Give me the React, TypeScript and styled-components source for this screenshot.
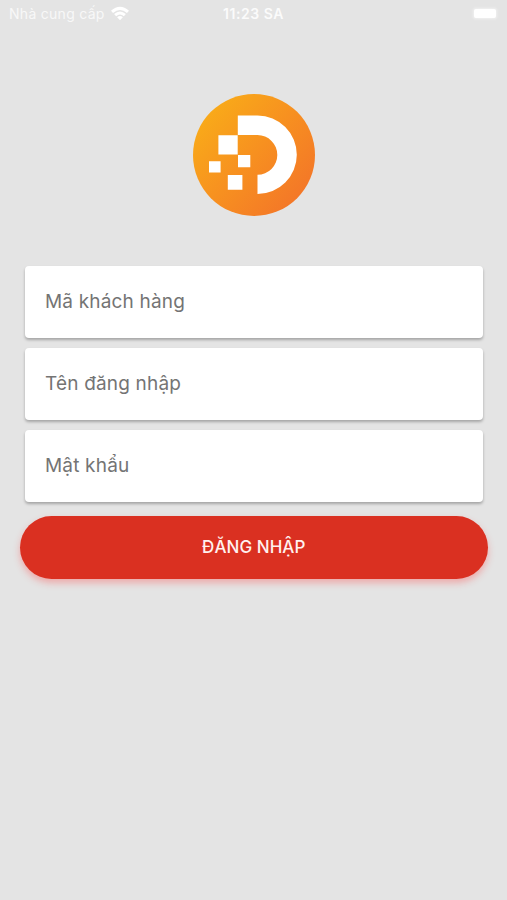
import React from "react";
import styled, { createGlobalStyle } from "styled-components";

const GlobalStyle = createGlobalStyle`
  *, *::before, *::after { box-sizing: border-box; }
  body {
    margin: 0;
    background: #e4e4e4;
    font-family: Inter, "Noto Sans", sans-serif;
  }
`;

const Screen = styled.main`
  display: flex;
  flex-direction: column;
  align-items: center;
  min-height: 900px;
  background: #e4e4e4;
`;

const StatusBar = styled.header`
  display: grid;
  grid-template-columns: 1fr auto 1fr;
  align-items: center;
  width: 100%;
  height: 27px;
  padding: 0 11px 0 9px;
  color: #fbfbfb;
  font-size: 14px;
  line-height: 27px;
`;

const Carrier = styled.div`
  display: flex;
  align-items: center;
  gap: 5px;
`;

const CarrierName = styled.span`
  font-weight: 400;
  letter-spacing: 0.28px;
  white-space: nowrap;
  color: #f8f8f8;
`;

const Clock = styled.time`
  padding-left: 2px;
  font-weight: 600;
  font-size: 14px;
  letter-spacing: 0.55px;
`;

const Battery = styled.span`
  justify-self: end;
  width: 22px;
  height: 9px;
  border-radius: 2px;
  background: #fff;
  box-shadow: 0 0 3px 1px rgba(255, 255, 255, 0.5);
`;

const Logo = styled.svg`
  display: block;
  width: 122px;
  height: 122px;
  margin-top: 67px;
`;

const Form = styled.form`
  display: flex;
  flex-direction: column;
  width: 100%;
  padding: 0 19.5px 0 20px;
  margin-top: 49.5px;
`;

const Fields = styled.div`
  display: flex;
  flex-direction: column;
  gap: 10px;
  padding: 0 5px;
`;

const Field = styled.input`
  width: 100%;
  height: 72px;
  padding: 0 20px;
  border: 0;
  border-radius: 4px;
  outline: 0;
  background: #fff;
  box-shadow: 0 2px 3px rgba(0, 0, 0, 0.28);
  color: #333;
  font-family: inherit;
  font-size: 19px;
  letter-spacing: 0.18px;

  &::placeholder {
    color: #747474;
    opacity: 1;
  }
`;

const SubmitButton = styled.button`
  height: 62.5px;
  margin-top: 14.5px;
  padding: 0;
  border: 0;
  border-radius: 32px;
  background: #da3021;
  box-shadow: 0 4px 7px rgba(255, 60, 60, 0.34);
  color: #fff1ef;
  font-family: inherit;
  font-size: 17px;
  font-weight: 550;
  letter-spacing: 0.05px;
`;

const WifiIcon = () => (
  <svg width="20" height="15" viewBox="0 0 18 14" aria-hidden="true">
    <path d="M0.6 4.5Q9-3.1 17.4 4.5L15.5 6.5Q9 0.9 2.5 6.5Z" fill="#fff" />
    <path d="M3.5 7.5Q9 2.8 14.5 7.5L12.6 9.5Q9 6.5 5.4 9.5Z" fill="#fff" />
    <path d="M6.3 10.4Q9 8.2 11.7 10.4L9 13.2Z" fill="#fff" />
  </svg>
);

const BrandLogo = () => (
  <Logo viewBox="0 0 122 122" role="img" aria-label="Logo">
    <defs>
      <linearGradient id="brand" x1="0.05" y1="0.1" x2="0.95" y2="0.9">
        <stop offset="0" stopColor="#f9ae18" />
        <stop offset="0.5" stopColor="#f79020" />
        <stop offset="1" stopColor="#f37329" />
      </linearGradient>
    </defs>
    <circle cx="61" cy="61" r="61" fill="url(#brand)" />
    <g fill="#fff">
      <path d="M44.8 21.4H64.5a39.3 39.3 0 0 1 0 78.6V80.7a19.8 19.8 0 0 0 0-39.6H44.8Z" />
      <path d="M25.4 41.3h19.3v19.3H25.4ZM45 61h12.3v12.2H45ZM16 67.2h11.6v11.4H16ZM34.8 81.1h14.6v14.6H34.8Z" />
    </g>
  </Logo>
);

const fields = [
  { name: "customer", label: "Mã khách hàng", type: "text" },
  { name: "username", label: "Tên đăng nhập", type: "text" },
  { name: "password", label: "Mật khẩu", type: "password" },
];

export default function App() {
  return (
    <>
      <GlobalStyle />
      <Screen>
        <StatusBar>
          <Carrier>
            <CarrierName>Nhà cung cấp</CarrierName>
            <WifiIcon />
          </Carrier>
          <Clock>11:23 SA</Clock>
          <Battery />
        </StatusBar>
        <BrandLogo />
        <Form onSubmit={(event) => event.preventDefault()}>
          <Fields>
            {fields.map(({ name, label, type }) => (
              <Field key={name} name={name} type={type} placeholder={label} aria-label={label} />
            ))}
          </Fields>
          <SubmitButton type="submit">ĐĂNG NHẬP</SubmitButton>
        </Form>
      </Screen>
    </>
  );
}
